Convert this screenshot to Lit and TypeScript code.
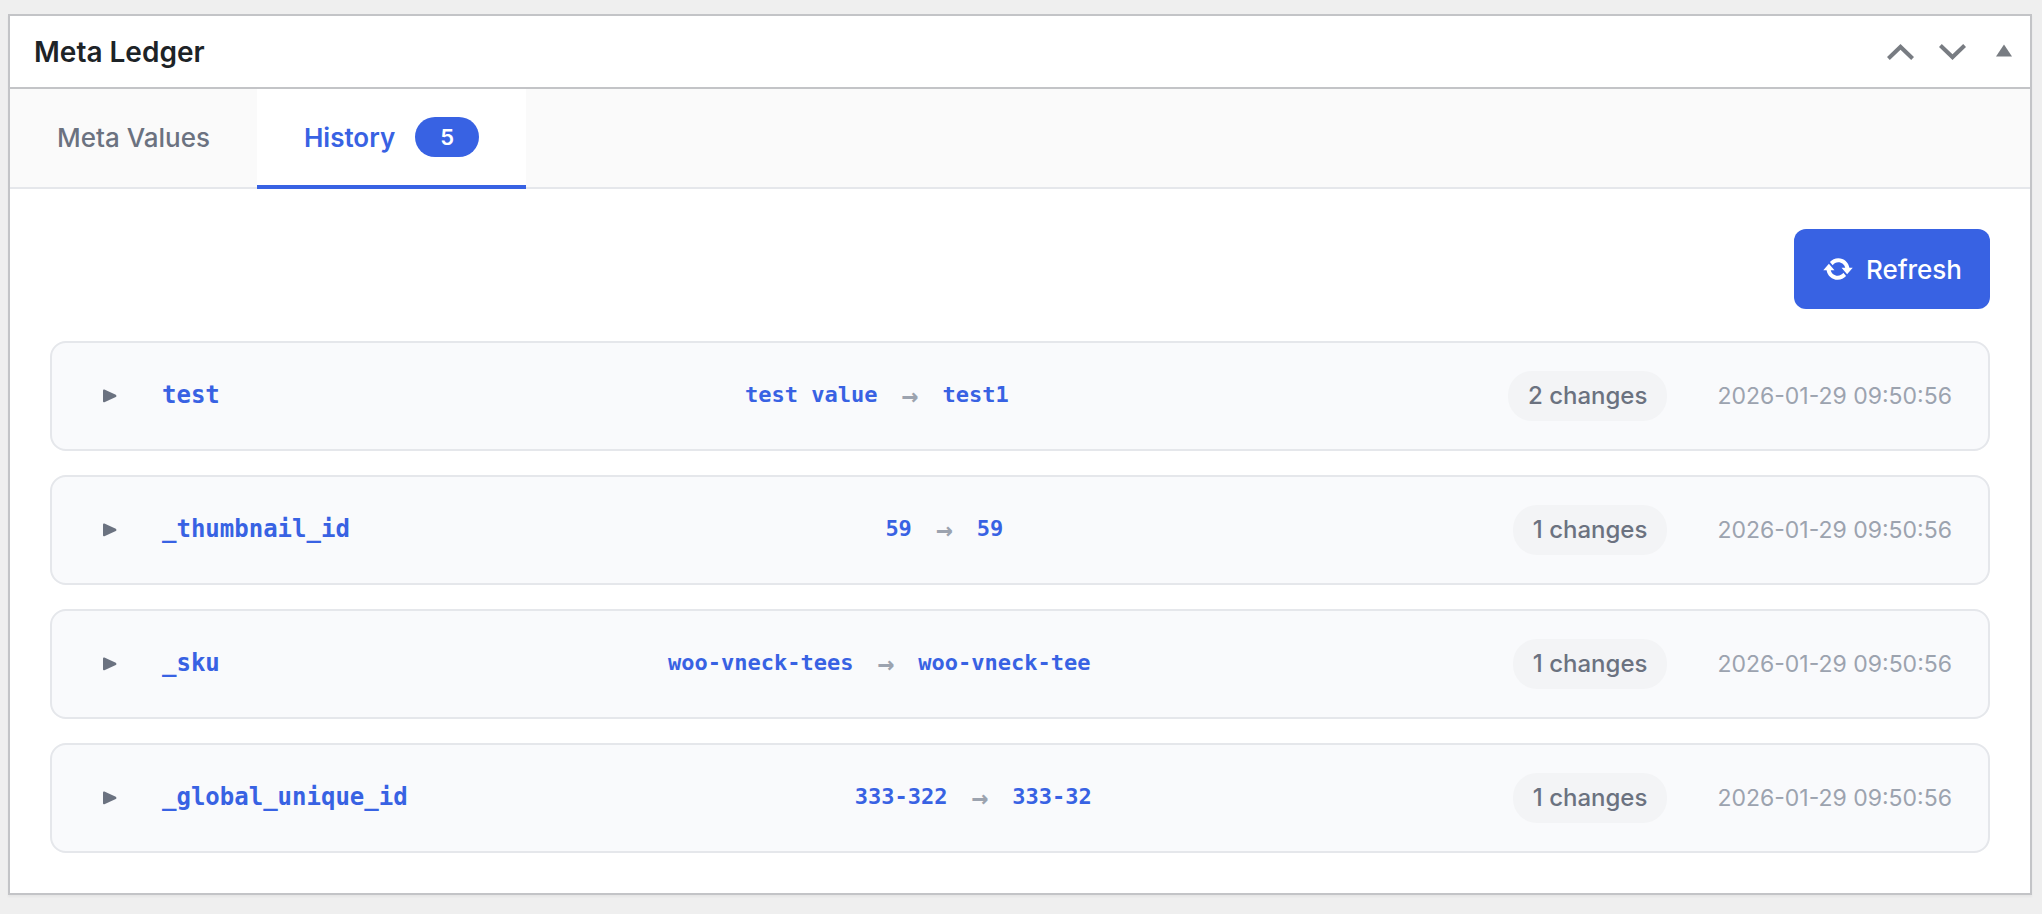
import { LitElement, html, css } from "lit";
import { customElement, state } from "lit/decorators.js";
import { classMap } from "lit/directives/class-map.js";

interface Entry {
  key: string;
  from: string;
  to: string;
  changes: number;
  date: string;
}

const DATE = "2026-01-29 09:50:56";

const ENTRIES: Entry[] = [
  { key: "test", from: "test value", to: "test1", changes: 2, date: DATE },
  { key: "_thumbnail_id", from: "59", to: "59", changes: 1, date: DATE },
  { key: "_sku", from: "woo-vneck-tees", to: "woo-vneck-tee", changes: 1, date: DATE },
  { key: "_global_unique_id", from: "333-322", to: "333-32", changes: 1, date: DATE },
];

@customElement("app-root")
export class AppRoot extends LitElement {
  static styles = css`
    :host {
      display: block;
      box-sizing: border-box;
      min-height: 100vh;
      padding: 14px 10px 20px 8px;
      background: #efefef;
      font-family: Inter, sans-serif;
      color: #1d2327;
    }
    button {
      margin: 0;
      padding: 0;
      border: 0;
      background: none;
      color: inherit;
      font: inherit;
      cursor: pointer;
    }
    svg {
      display: block;
      fill: currentColor;
    }
    .panel {
      border: 2px solid #c3c4c7;
      background: #fff;
      box-shadow: 0 2px 2px rgba(0, 0, 0, 0.04);
    }
    .header {
      display: flex;
      align-items: center;
      justify-content: space-between;
      padding-left: 24px;
      border-bottom: 2px solid #c3c4c7;
    }
    .title {
      margin: 0;
      padding: 17px 0 16px;
      font-size: 28px;
      line-height: 38px;
      font-weight: 600;
    }
    .actions {
      display: flex;
      color: #787c82;
    }
    .action {
      display: grid;
      place-items: center;
      width: 52px;
      height: 52px;
    }
    .tabs {
      display: flex;
      border-bottom: 2px solid #e5e7eb;
      background: #fafafa;
    }
    .tab {
      display: flex;
      align-items: center;
      gap: 20px;
      margin-bottom: -2px;
      padding: 28px 47px;
      border-bottom: 4px solid transparent;
      color: #6b7280;
      font-size: 26px;
      line-height: 40px;
      font-weight: 500;
    }
    .tab.active {
      background: #fff;
      border-bottom-color: #3862e3;
      color: #3862e3;
      font-weight: 600;
    }
    .label {
      padding-top: 2px;
      line-height: 38px;
    }
    .count {
      min-width: 64px;
      border-radius: 20px;
      background: #3862e3;
      color: #fff;
      font-size: 22px;
      font-weight: 600;
      text-align: center;
    }
    .content {
      padding: 40px;
    }
    .toolbar {
      display: flex;
      justify-content: flex-end;
      margin-bottom: 32px;
    }
    .refresh {
      display: flex;
      align-items: center;
      gap: 12px;
      padding: 20px 28px;
      border-radius: 12px;
      background: #3862e3;
      color: #fff;
      font-size: 26px;
      line-height: 40px;
      font-weight: 500;
    }
    .list {
      display: flex;
      flex-direction: column;
      gap: 24px;
      margin: 0;
      padding: 0;
      list-style: none;
    }
    .row {
      box-sizing: border-box;
      display: flex;
      align-items: center;
      justify-content: space-between;
      width: 100%;
      padding: 28px 36px 28px 50px;
      border: 2px solid #e5e7eb;
      border-radius: 16px;
      background: #f9fafc;
      text-align: left;
    }
    .name,
    .values,
    .meta {
      display: flex;
      align-items: center;
      white-space: nowrap;
    }
    .name {
      gap: 44px;
      color: #6b7280;
    }
    .key,
    .value {
      padding-bottom: 2px;
      font-family: "DejaVu Sans Mono", monospace;
      font-weight: 700;
      line-height: 30px;
      color: #3862e3;
    }
    .key {
      font-size: 24px;
    }
    .values {
      gap: 24px;
      padding-left: 26px;
    }
    .value {
      font-size: 22px;
    }
    .arrow {
      font-family: "DejaVu Sans Mono", monospace;
      font-size: 28px;
      font-weight: 700;
      line-height: 30px;
      color: #9ca3af;
    }
    .meta {
      gap: 50px;
    }
    .changes {
      padding: 0 20px;
      border-radius: 24px;
      background: #f3f4f6;
      color: #6b7280;
      font-size: 24px;
      line-height: 50px;
      font-weight: 500;
    }
    .date {
      color: #9ca3af;
      font-size: 23px;
      line-height: 30px;
    }
  `;

  @state() private tab = "history";
  @state() private open = new Set<string>();

  private toggle(key: string) {
    const next = new Set(this.open);
    if (!next.delete(key)) next.add(key);
    this.open = next;
  }

  private renderTab(id: string, label: string, count?: number) {
    const active = this.tab === id;
    return html`<button
      class=${classMap({ tab: true, active })}
      role="tab"
      aria-selected=${active ? "true" : "false"}
      @click=${() => (this.tab = id)}
    >
      <span class="label">${label}</span>${count ? html`<span class="count">${count}</span>` : ""}
    </button>`;
  }

  private renderEntry(e: Entry) {
    return html`<li>
      <button
        class="row"
        aria-expanded=${this.open.has(e.key) ? "true" : "false"}
        @click=${() => this.toggle(e.key)}
      >
        <span class="name">
          <svg width="16" height="14" viewBox="0 0 16 14" aria-hidden="true">
            <path d="M1 1.6Q1 .2 2.4 .6L13.8 5.8Q15.4 7 13.8 8L2.4 13.2Q1 13.6 1 12.2Z" />
          </svg>
          <span class="key">${e.key}</span>
        </span>
        <span class="values">
          <span class="value">${e.from}</span>
          <span class="arrow">→</span>
          <span class="value">${e.to}</span>
        </span>
        <span class="meta">
          <span class="changes">${e.changes} changes</span>
          <span class="date">${e.date}</span>
        </span>
      </button>
    </li>`;
  }

  render() {
    return html`<section class="panel">
      <header class="header">
        <h2 class="title">Meta Ledger</h2>
        <div class="actions">
          <button class="action" aria-label="Move up">
            <svg width="27" height="16" viewBox="0 0 27 16">
              <path d="M13.5 0L27 12.9L24.2 15.9L13.5 5.7L2.8 15.9L0 12.9Z" />
            </svg>
          </button>
          <button class="action" aria-label="Move down">
            <svg width="27" height="16" viewBox="0 0 27 16">
              <path d="M13.5 15.9L0 3L2.8 0L13.5 10.2L24.2 0L27 3Z" />
            </svg>
          </button>
          <button class="action" aria-label="Toggle panel">
            <svg width="16" height="16" viewBox="0 0 16 16">
              <path d="M8 .5L16 12.5H0Z" />
            </svg>
          </button>
        </div>
      </header>
      <nav class="tabs" role="tablist">
        ${this.renderTab("values", "Meta Values")} ${this.renderTab("history", "History", 5)}
      </nav>
      <div class="content">
        <div class="toolbar">
          <button class="refresh">
            <svg width="32" height="32" viewBox="0 0 20 20" aria-hidden="true">
              <path
                d="M10.2 3.28c3.53 0 6.43 2.61 6.92 6h2.08l-3.5 4-3.5-4h2.32c-.45-1.97-2.21-3.45-4.32-3.45-1.45 0-2.73.71-3.54 1.78L4.95 5.66C6.23 4.2 8.11 3.28 10.2 3.28zm-.4 13.44c-3.52 0-6.43-2.61-6.92-6H.8l3.5-4c1.17 1.33 2.33 2.67 3.5 4H5.48c.45 1.97 2.21 3.45 4.32 3.45 1.45 0 2.73-.71 3.54-1.78l1.71 1.95c-1.28 1.46-3.15 2.38-5.25 2.38z"
              />
            </svg>
            <span class="label">Refresh</span>
          </button>
        </div>
        <ul class="list">
          ${ENTRIES.map((e) => this.renderEntry(e))}
        </ul>
      </div>
    </section>`;
  }
}
